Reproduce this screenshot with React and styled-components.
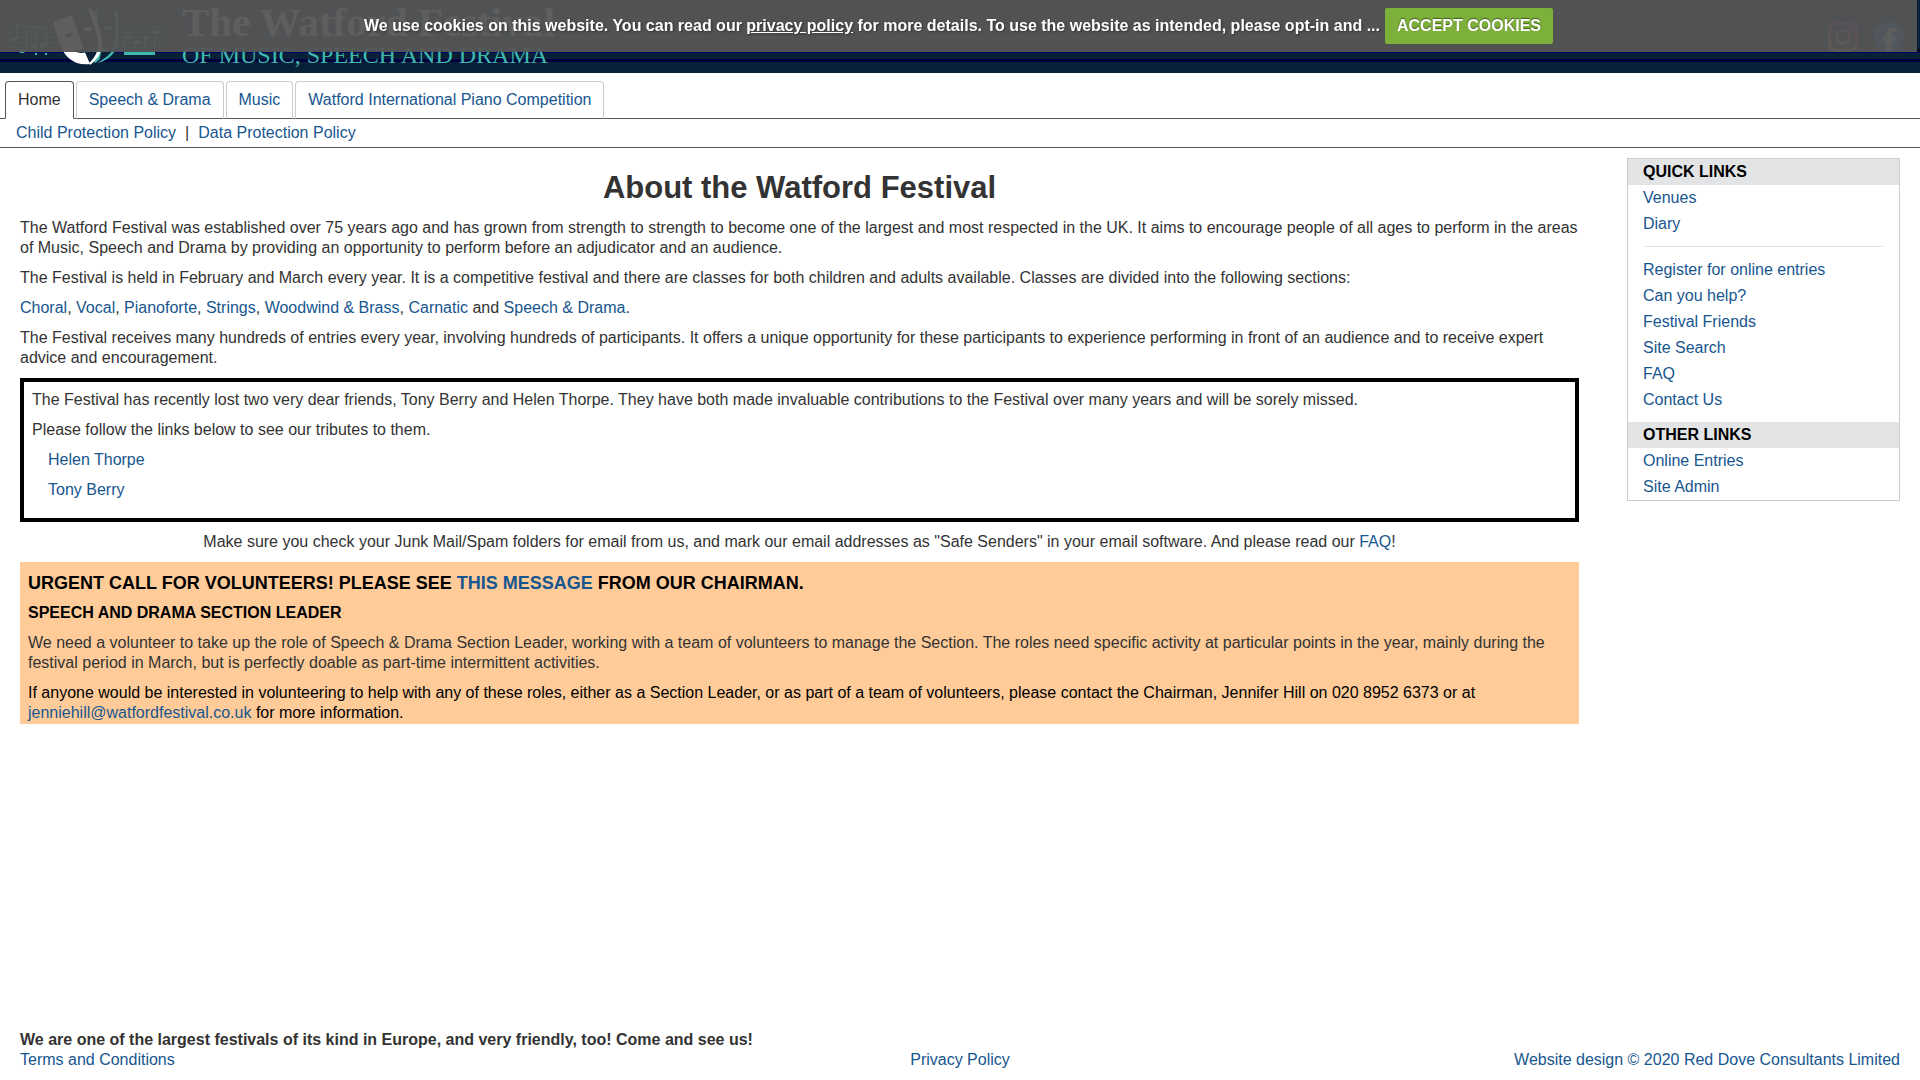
import React from 'react';
import styled, { createGlobalStyle, css } from 'styled-components';

const tabs = ['Home', 'Speech & Drama', 'Music', 'Watford International Piano Competition'];

const sections = ['Choral', 'Vocal', 'Pianoforte', 'Strings', 'Woodwind & Brass'];

const quickLinks = ['Venues', 'Diary'];

const festivalLinks = [
  'Register for online entries',
  'Can you help?',
  'Festival Friends',
  'Site Search',
  'FAQ',
  'Contact Us',
];

const otherLinks = ['Online Entries', 'Site Admin'];

function Logo() {
  return (
    <LogoMark viewBox="0 0 166 73" aria-hidden="true">
      <g stroke="#3fb8af" strokeWidth="1" fill="none">
        <path d="M8 27.5H58M8 32.5H58M8 37.5H58M8 42.5H58M8 47.5H58" opacity="0.5" />
        <path d="M118 27.5H164M118 32.5H164M118 37.5H164M118 42.5H164M118 47.5H164" opacity="0.5" />
        <path d="M16.5 39V25L46.5 28V46M26.5 50V27M36.5 50V28" />
        <path d="M124.5 54V37M134.5 54V42M144.5 54V37M154.5 54V32" />
        <path d="M124 53.5H155" strokeWidth="3" />
      </g>
      <g fill="#3fb8af">
        <ellipse cx="13" cy="39" rx="3" ry="2" />
        <ellipse cx="22" cy="51" rx="3" ry="2" />
        <ellipse cx="33" cy="47" rx="3" ry="2" />
        <ellipse cx="43" cy="45" rx="3" ry="2" />
        <rect x="35" y="53" width="2" height="2" />
        <rect x="45" y="53" width="2" height="2" />
        <ellipse cx="127" cy="37" rx="3" ry="2" />
        <ellipse cx="137" cy="42" rx="3" ry="2" />
        <ellipse cx="147" cy="37" rx="3" ry="2" />
        <ellipse cx="157" cy="32" rx="3" ry="2" />
        <path d="M78 12Q84 9 90 10L92 20Z" />
        <path d="M93 10H98V44Q106 47 108 51L99 60Q97 62 95 63L93 60Z" />
        <path d="M115 10H118V40C118 52 108 61 97 63C106 58 115 50 115 38Z" />
        <ellipse cx="108" cy="28" rx="4" ry="2" />
      </g>
      <path d="M101 51H112C108 56 104 59 99 61Q101 56 101 51Z" fill="#082038" />
      <path d="M72 15L90 8C95 18 101 32 101 42C101 52 96 60 90 64Z" fill="#082038" />
      <path d="M53 22L72 15L84 50L90 64C74 66 66 57 62 49C58 41 56 31 53 22Z" fill="#fff" />
      <path d="M88 9L91 8C96 18 102 32 102 43C102 53 97 60 90 65L89 63C95 58 99 50 98 42C97 31 92 20 88 9Z" fill="#fff" />
      <ellipse cx="69" cy="35" rx="4" ry="2" fill="#082038" transform="rotate(-15 69 35)" />
      <ellipse cx="88" cy="29" rx="4" ry="2" fill="#fff" transform="rotate(-15 88 29)" />
      <path d="M72 50Q84 52 94 41Q92 53 81 53Q76 53 72 50Z" fill="#082038" />
    </LogoMark>
  );
}

function InstagramIcon() {
  return (
    <SocialIcon viewBox="0 0 30 30" aria-hidden="true">
      <defs>
        <linearGradient id="insta" x1="0.3" y1="1" x2="0.7" y2="0">
          <stop offset="0" stopColor="#fdc34a" />
          <stop offset="0.5" stopColor="#e4304f" />
          <stop offset="1" stopColor="#9b36b7" />
        </linearGradient>
      </defs>
      <g fill="none" stroke="url(#insta)" strokeWidth="3">
        <rect x="1.5" y="1.5" width="27" height="27" rx="7" />
        <circle cx="15" cy="15" r="6.5" />
      </g>
      <circle cx="23" cy="7" r="2" fill="#d6306f" />
    </SocialIcon>
  );
}

function FacebookIcon() {
  return (
    <SocialIcon viewBox="0 0 30 30" aria-hidden="true">
      <circle cx="15" cy="15" r="15" fill="#1877f2" />
      <path
        d="M12.5 30V19.5H8.5V15H12.5V11.8C12.5 7.8 14.8 5.7 18.4 5.7C20.2 5.7 22 6 22 6V9.8H20C18 9.8 17.3 11 17.3 12.2V15H21.7L21 19.5H17.3V30Z"
        fill="#fff"
      />
    </SocialIcon>
  );
}

function App() {
  return (
    <Page>
      <GlobalStyle />
      <Header>
        <Brand>
          <Logo />
          <BrandText>
            <BrandName>The Watford Festival</BrandName>
            <Strapline>OF MUSIC, SPEECH AND DRAMA</Strapline>
          </BrandText>
        </Brand>
        <Social>
          <Link href="#" aria-label="Instagram"><InstagramIcon /></Link>
          <Link href="#" aria-label="Facebook"><FacebookIcon /></Link>
        </Social>
      </Header>

      <CookieBar>
        <span>
          We use cookies on this website. You can read our <PolicyLink href="#">privacy policy</PolicyLink> for
          more details. To use the website as intended, please opt-in and ...
        </span>
        <AcceptButton type="button">ACCEPT COOKIES</AcceptButton>
      </CookieBar>

      <nav>
        <Tabs>
          {tabs.map((tab, i) => (
            <li key={tab}>
              <Tab href="#" $active={i === 0}>{tab}</Tab>
            </li>
          ))}
        </Tabs>
        <SubNav>
          <Link href="#">Child Protection Policy</Link>
          <span>|</span>
          <Link href="#">Data Protection Policy</Link>
        </SubNav>
      </nav>

      <Body>
        <Main>
          <Title>About the Watford Festival</Title>
          <Text>
            The Watford Festival was established over 75 years ago and has grown from strength to strength to
            become one of the largest and most respected in the UK. It aims to encourage people of all ages to
            perform in the areas of Music, Speech and Drama by providing an opportunity to perform before an
            adjudicator and an audience.
          </Text>
          <Text>
            The Festival is held in February and March every year. It is a competitive festival and there are
            classes for both children and adults available. Classes are divided into the following sections:
          </Text>
          <Text>
            {sections.map((name) => (
              <React.Fragment key={name}>
                <Link href="#">{name}</Link>,{' '}
              </React.Fragment>
            ))}
            <Link href="#">Carnatic</Link> and <Link href="#">Speech &amp; Drama</Link>.
          </Text>
          <Text>
            The Festival receives many hundreds of entries every year, involving hundreds of participants. It
            offers a unique opportunity for these participants to experience performing in front of an audience
            and to receive expert advice and encouragement.
          </Text>

          <Tribute>
            <Text>
              The Festival has recently lost two very dear friends, Tony Berry and Helen Thorpe. They have both
              made invaluable contributions to the Festival over many years and will be sorely missed.
            </Text>
            <Text>Please follow the links below to see our tributes to them.</Text>
            <TributeLinks>
              <Text><Link href="#">Helen Thorpe</Link></Text>
              <Text><Link href="#">Tony Berry</Link></Text>
            </TributeLinks>
          </Tribute>

          <Text $center>
            Make sure you check your Junk Mail/Spam folders for email from us, and mark our email addresses as
            "Safe Senders" in your email software. And please read our <Link href="#">FAQ</Link>!
          </Text>

          <Urgent>
            <UrgentTitle>
              URGENT CALL FOR VOLUNTEERS! PLEASE SEE <Link href="#">THIS MESSAGE</Link> FROM OUR CHAIRMAN.
            </UrgentTitle>
            <UrgentSubtitle>SPEECH AND DRAMA SECTION LEADER</UrgentSubtitle>
            <Text>
              We need a volunteer to take up the role of Speech &amp; Drama Section Leader, working with a team
              of volunteers to manage the Section. The roles need specific activity at particular points in the
              year, mainly during the festival period in March, but is perfectly doable as part-time
              intermittent activities.
            </Text>
            <Text $dark>
              If anyone would be interested in volunteering to help with any of these roles, either as a Section
              Leader, or as part of a team of volunteers, please contact the Chairman, Jennifer Hill on 020 8952
              6373 or at <Link href="#">jenniehill@watfordfestival.co.uk</Link> for more information.
            </Text>
          </Urgent>
        </Main>

        <Sidebar>
          <SideHeading>QUICK LINKS</SideHeading>
          {quickLinks.map((item) => <SideLink href="#" key={item}>{item}</SideLink>)}
          <Divider />
          <SideGroup>
            {festivalLinks.map((item) => <SideLink href="#" key={item}>{item}</SideLink>)}
          </SideGroup>
          <SideHeading>OTHER LINKS</SideHeading>
          {otherLinks.map((item) => <SideLink href="#" key={item}>{item}</SideLink>)}
        </Sidebar>
      </Body>

      <Footer>
        <strong>We are one of the largest festivals of its kind in Europe, and very friendly, too! Come and see us!</strong>
        <FooterLinks>
          <Link href="#">Terms and Conditions</Link>
          <Link href="#">Privacy Policy</Link>
          <Link href="#">Website design © 2020 Red Dove Consultants Limited</Link>
        </FooterLinks>
      </Footer>
    </Page>
  );
}

export default App;

const GlobalStyle = createGlobalStyle`
  *, *:before, *:after {
    box-sizing: border-box;
  }

  body {
    margin: 0;
    background: #fff;
    color: #333;
    font-family: "Liberation Sans", Arial, sans-serif;
    font-size: 16px;
    line-height: 20px;
  }
`;

const Page = styled.div`
  display: flex;
  flex-direction: column;
  min-height: 100vh;
`;

const Link = styled.a`
  color: #17568f;
  text-decoration: none;

  &:hover {
    text-decoration: underline;
  }
`;

const Header = styled.header`
  display: flex;
  justify-content: space-between;
  height: 73px;
  background-color: #082038;
  background-image:
    linear-gradient(#000066, #000066),
    repeating-linear-gradient(90deg, #000 0 1px, #00004d 1px 2px),
    linear-gradient(#00004d, #00004d),
    repeating-linear-gradient(90deg, #000 0 1px, #00004d 1px 2px);
  background-repeat: no-repeat;
  background-position: 0 52px, 0 60px, 0 59px, right 49px;
  background-size: 100% 1px, 100% 1px, 100% 3px, 3px 3px;
`;

const Brand = styled.div`
  display: flex;
  gap: 16px;
`;

const LogoMark = styled.svg`
  width: 166px;
  height: 73px;
`;

const BrandText = styled.div`
  padding-top: 2px;
  white-space: nowrap;
  font-family: "Liberation Serif", serif;
`;

const BrandName = styled.div`
  font-size: 41px;
  font-weight: bold;
  line-height: 40px;
  color: #fff;
`;

const Strapline = styled.div`
  font-size: 24px;
  line-height: 26px;
  color: #3fb8af;
`;

const Social = styled.div`
  display: flex;
  gap: 16px;
  padding: 22px 16px 0 0;
`;

const SocialIcon = styled.svg`
  display: block;
  width: 30px;
  height: 30px;
`;

const CookieBar = styled.div`
  position: fixed;
  top: 0;
  left: 0;
  right: 3px;
  z-index: 10;
  display: flex;
  align-items: center;
  justify-content: center;
  gap: 5px;
  padding: 8px 0;
  background: rgba(85, 85, 85, 0.95);
  color: #fff;
  font-weight: bold;
  text-shadow: 1px 1px 2px #333;
`;

const PolicyLink = styled.a`
  color: #fff;
  text-decoration: underline;
`;

const AcceptButton = styled.button`
  padding: 8px 12px;
  border: 0;
  border-radius: 2px;
  background: #7daf3b;
  color: #fff;
  font: inherit;
  text-shadow: 0 -1px 1px rgba(0, 0, 0, 0.5);
  cursor: pointer;
`;

const Tabs = styled.ul`
  display: flex;
  gap: 2px;
  margin: 8px 0 0;
  padding: 0 5px;
  border-bottom: 1px solid #555;
  list-style: none;
`;

const Tab = styled.a`
  display: block;
  margin-bottom: -1px;
  padding: 8px 12px;
  border: 1px solid #ccc;
  border-bottom: 1px solid transparent;
  border-radius: 4px 4px 0 0;
  color: #17568f;
  text-decoration: none;

  ${(props) => props.$active && css`
    border-color: #555 #555 #fff;
    background: #fff;
    color: #333;
  `}
`;

const SubNav = styled.div`
  display: flex;
  gap: 9px;
  padding: 4px 16px;
  border-bottom: 1px solid #555;
`;

const Body = styled.div`
  display: flex;
  flex: 1;
  align-items: flex-start;
  gap: 48px;
  padding: 10px 20px;
`;

const Main = styled.main`
  flex: 1;
  min-width: 0;
  padding-top: 10px;
`;

const Title = styled.h1`
  margin: 0 0 10px;
  font-size: 31px;
  line-height: 40px;
  text-align: center;
`;

const Text = styled.p`
  margin: 0 0 10px;
  color: ${(props) => (props.$dark ? '#000' : 'inherit')};
  text-align: ${(props) => (props.$center ? 'center' : 'left')};
`;

const Tribute = styled.section`
  margin-bottom: 10px;
  padding: 8px;
  border: 4px solid #000;
`;

const TributeLinks = styled.div`
  padding-left: 16px;
`;

const Urgent = styled.section`
  padding: 10px 8px 1px;
  background: #fc9;

  p:last-child {
    margin-bottom: 0;
  }
`;

const UrgentTitle = styled.h2`
  margin: 0 0 8px;
  color: #000;
  font-size: 18px;
  line-height: 23px;
`;

const UrgentSubtitle = styled.h3`
  margin: 0 0 10px;
  color: #000;
  font-size: 16px;
`;

const Sidebar = styled.aside`
  flex: 0 0 273px;
  border: 1px solid #ccc;
`;

const SideHeading = styled.h2`
  margin: 0;
  padding: 3px 15px;
  background: #e3e4e6;
  color: #000;
  font-size: 16px;
`;

const SideLink = styled.a`
  display: block;
  padding: 3px 15px;
  color: #17568f;
  text-decoration: none;
`;

const SideGroup = styled.div`
  padding-bottom: 9px;
`;

const Divider = styled.hr`
  height: 1px;
  margin: 9px 16px 10px;
  border: 0;
  background: #e3e4e6;
`;

const Footer = styled.footer`
  padding: 0 20px 10px;
`;

const FooterLinks = styled.div`
  display: grid;
  grid-template-columns: 1fr auto 1fr;

  a:last-child {
    text-align: right;
  }
`;
